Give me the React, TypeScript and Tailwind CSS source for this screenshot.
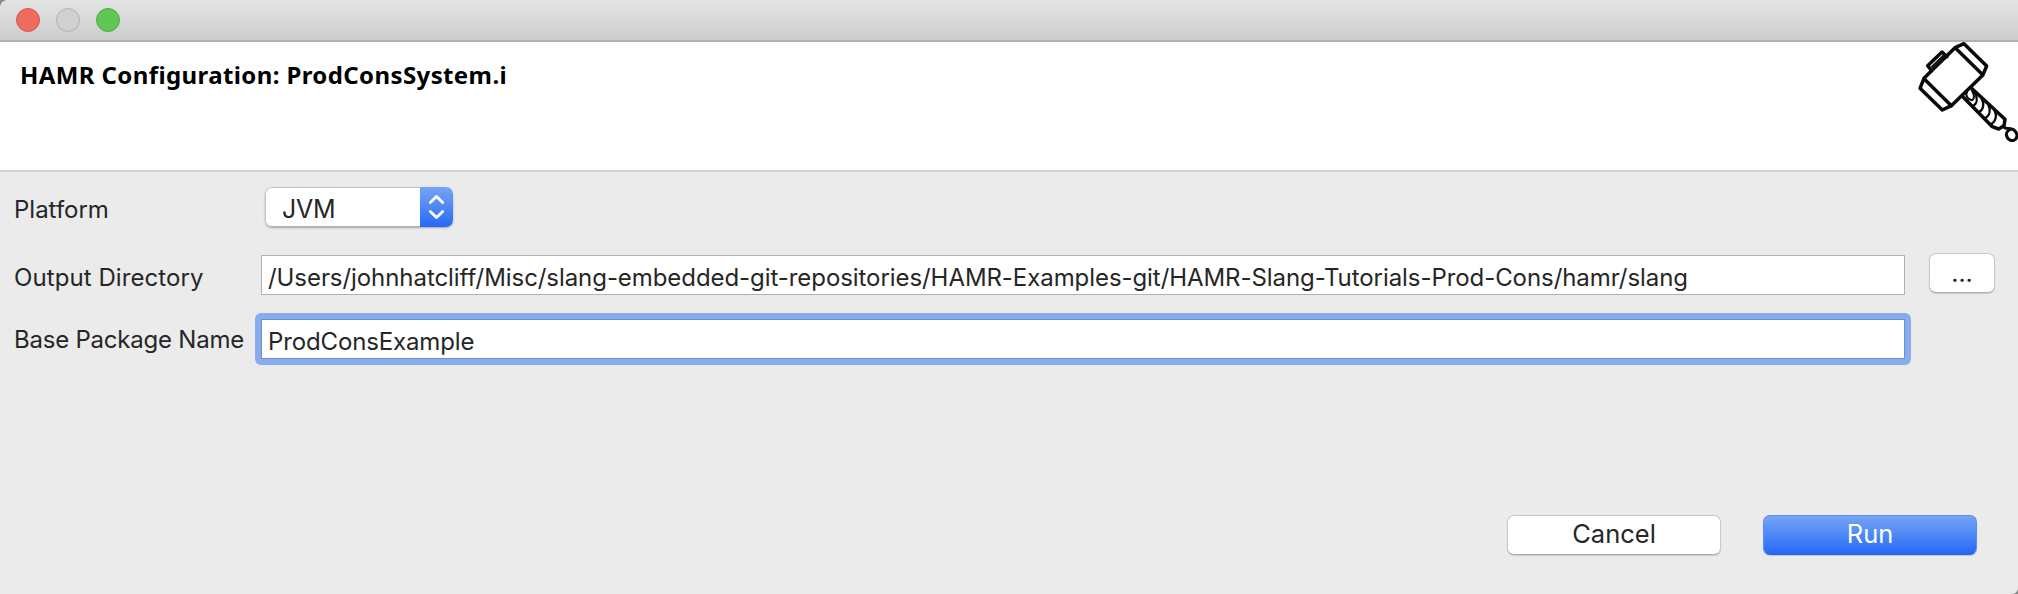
import React from "react";

function HammerIcon() {
  return (
    <svg
      className="h-[120px] w-[120px]"
      viewBox="0 0 360 360"
      fill="none"
      stroke="#0a0a0a"
      strokeWidth="10.5"
      strokeLinecap="round"
      strokeLinejoin="round"
    >
      <path d="M171 53 L198 41 L266 108 L254 136 L160 227 L133 240 L66 175 L78 145 Z" />
      <path d="M173 55 L254 134" />
      <path d="M79 147 L160 227" />
      <path d="M101 122 L89 107 L132 66 L147 80" />
      <path d="M102 110 L136 77" strokeWidth="6" />
      <path d="M219 173 L321 268 L318 287 L302 297 L283 290 L193 199" strokeWidth="10.5" />
      <path d="M207 187 C201 197 209 207 222 211 C230 206 230 196 222 182" strokeWidth="6" />
      <path d="M231 188 C240 206 237 222 224 229" strokeWidth="7" />
      <path d="M251 206 C260 223 256 240 242 247" strokeWidth="7" />
      <path d="M271 224 C279 241 275 257 260 266" strokeWidth="7" />
      <path d="M290 242 C298 258 293 275 278 284" strokeWidth="7" />
      <path d="M317 291 C325 300 336 291 347 299 C360 311 359 321 352 328 C342 337 327 328 325 314 C325 306 332 299 341 297" strokeWidth="9" />
    </svg>
  );
}

function TitleBar() {
  return (
    <div className="flex h-[42px] shrink-0 items-start gap-4 rounded-tl-[8px] border-b-2 border-[#b1b1b1] bg-linear-to-b from-[#e4e4e4] to-[#cdcdcd] pl-4 pt-2">
      <span className="size-6 rounded-full border border-[#d9584e] bg-[#ed6b60]" />
      <span className="size-6 rounded-full border border-[#b0b0b0] bg-[#d0d0d0]" />
      <span className="size-6 rounded-full border border-[#4fae42] bg-[#61c654]" />
    </div>
  );
}

function Chevrons() {
  return (
    <svg className="h-10 w-[33px]" viewBox="0 0 33 40" fill="none" stroke="#fff" strokeWidth="2.8" strokeLinecap="round" strokeLinejoin="round">
      <path d="M10.3 15.6 L16.5 9.4 L22.7 15.6" />
      <path d="M10.3 24.4 L16.5 30.6 L22.7 24.4" />
    </svg>
  );
}

export default function App() {
  return (
    <div className="bg-[#8a8a8a]">
      <div className="flex h-[594px] w-[2018px] flex-col overflow-hidden rounded-tl-[8px] rounded-br-[6px] bg-[#ebebeb] font-['Inter',sans-serif] text-[24px] leading-[30px] text-[#262626]">
        <TitleBar />
        <header className="flex h-[130px] shrink-0 justify-between border-b-2 border-[#d2d2d2] bg-white">
          <h1 className="pl-5 pt-[17px] font-['Noto_Sans',sans-serif] text-[24px] leading-[32px] font-bold tracking-[0.39px] whitespace-nowrap text-black">
            HAMR Configuration: ProdConsSystem.i
          </h1>
          <div className="-mt-3">
            <HammerIcon />
          </div>
        </header>
        <main className="flex flex-col pl-[14px]">
          <div className="mt-[15px] flex h-10">
            <span className="w-[251px] pt-[8px] whitespace-nowrap">Platform</span>
            <button className="flex h-10 w-[188px] overflow-hidden rounded-[7px] bg-white text-left shadow-[0_1px_2px_rgba(0,0,0,0.3)]">
              <span className="h-10 grow rounded-l-[7px] border border-r-0 border-[#c4c4c4] border-b-[#aeaeae] pt-[6px] pl-[16px] text-[25px] tracking-[-0.3px]">JVM</span>
              <span className="h-10 w-[33px] bg-linear-to-b from-[#76a4f5] to-[#2468f6]">
                <Chevrons />
              </span>
            </button>
          </div>
          <div className="mt-[26px] flex h-[42px]">
            <span className="w-[247px] pt-[10px] tracking-[0.08px] whitespace-nowrap">Output Directory</span>
            <div className="mt-[2px] h-10 w-[1644px] border border-[#b0b0b0] bg-white pt-[7px] pl-[6px] tracking-[-0.067px] whitespace-nowrap">
              <span>/Users/johnhatcliff/Misc/slang-embedded-git-repositories/HAMR-Examples-git/HAMR-Slang-Tutorials-Prod-Cons/hamr/slang</span>
            </div>
            <button className="ml-6 h-10 w-[66px] rounded-[7px] border border-[#c8c8c8] border-b-[#aeaeae] bg-white pb-[1px] text-[25px] shadow-[0_1px_1px_rgba(0,0,0,0.15)]">...</button>
          </div>
          <div className="mt-[18px] flex h-[52px]">
            <span className="w-[241px] pt-[12px] tracking-[-0.22px] whitespace-nowrap">Base Package Name</span>
            <div className="h-[52px] w-[1656px] rounded-[6px] bg-[#8aabec] p-[6px]">
              <div className="h-10 border border-[#6a8fd8] bg-white pt-[7px] pl-[6px] tracking-[-0.14px] whitespace-nowrap">
                <span>ProdConsExample</span>
              </div>
            </div>
          </div>
        </main>
        <footer className="mt-auto mr-[41px] mb-[39px] flex justify-end gap-[42px] text-[25.5px]">
          <button className="h-10 w-[214px] rounded-[7px] border border-[#c8c8c8] border-b-[#aeaeae] bg-white pb-[3px] shadow-[0_1px_1px_rgba(0,0,0,0.15)]">Cancel</button>
          <button className="h-10 w-[214px] rounded-[7px] border border-[#5a8df0] border-b-[#2463e8] bg-linear-to-b from-[#76a4f5] to-[#2468f6] pb-[3px] text-white shadow-[0_1px_1px_rgba(0,0,0,0.15)]">Run</button>
        </footer>
      </div>
    </div>
  );
}
